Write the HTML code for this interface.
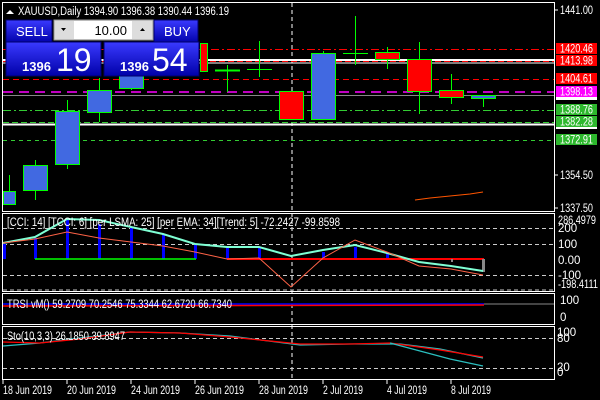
<!DOCTYPE html>
<html><head><meta charset="utf-8"><style>
html,body{margin:0;padding:0;background:#000;width:600px;height:400px;overflow:hidden}
svg{display:block}
text{font-family:"Liberation Sans",sans-serif;font-size:11.5px;fill:#fff}
</style></head><body>
<svg width="600" height="400" viewBox="0 0 600 400">
<rect width="600" height="400" fill="#000"/>
<g fill="none" stroke="#fff" stroke-width="1">
<path d="M2.5 2.5H554.5V211.5H2.5Z"/>
<path d="M2.5 213.5H554.5V291.5H2.5Z"/>
<path d="M2.5 293.5H554.5V324.5H2.5Z"/>
<path d="M2.5 326.5H554.5V379.5H2.5Z"/>
</g>
<line x1="292" y1="3" x2="292" y2="379" stroke="#fff" stroke-dasharray="4,3"/>
<g stroke-width="1">
<line x1="3" y1="49.5" x2="554" y2="49.5" stroke="#f00" stroke-dasharray="8,3,2,3"/>
<line x1="3" y1="60" x2="554" y2="60" stroke="#fff" stroke-width="2"/>
<line x1="3" y1="61.5" x2="554" y2="61.5" stroke="#f00" stroke-dasharray="6,3"/>
<line x1="3" y1="63" x2="554" y2="63" stroke="#fff"/>
<line x1="3" y1="79.5" x2="554" y2="79.5" stroke="#f00" stroke-dasharray="6,4"/>
<line x1="3" y1="92" x2="554" y2="92" stroke="#f0f" stroke-width="1.5" stroke-dasharray="10,6"/>
<line x1="3" y1="95.5" x2="554" y2="95.5" stroke="#888"/>
<line x1="3" y1="110.5" x2="554" y2="110.5" stroke="#3c3" stroke-dasharray="8,3,2,3"/>
<line x1="3" y1="122.5" x2="554" y2="122.5" stroke="#3c3" stroke-dasharray="6,3"/>
<line x1="3" y1="124.5" x2="554" y2="124.5" stroke="#fff" stroke-width="2"/>
<line x1="3" y1="140.5" x2="554" y2="140.5" stroke="#3c3" stroke-dasharray="4,4"/>
</g>
<polyline points="415,200 430,198 450,196 470,194 483,192" fill="none" stroke="#f50" stroke-width="1"/>
<g stroke="#0f0" stroke-width="1">
<line x1="9.5" y1="175" x2="9.5" y2="205"/><rect x="3.5" y="191.5" width="12" height="13" fill="#4169e1"/>
<line x1="35.5" y1="160" x2="35.5" y2="200"/><rect x="23.5" y="165.5" width="24" height="25" fill="#4169e1"/>
<line x1="67.5" y1="100" x2="67.5" y2="169"/><rect x="55.5" y="111.5" width="24" height="53" fill="#4169e1"/>
<line x1="99.5" y1="78" x2="99.5" y2="122"/><rect x="87.5" y="90.5" width="24" height="22" fill="#4169e1"/>
<line x1="131.5" y1="70" x2="131.5" y2="90"/><rect x="119.5" y="70.5" width="24" height="18" fill="#4169e1"/>
<rect x="200.5" y="43.5" width="7" height="28" fill="#f00"/>
<line x1="227.5" y1="65" x2="227.5" y2="92"/><line x1="215" y1="70.5" x2="240" y2="70.5" stroke-width="2"/>
<line x1="259.5" y1="41" x2="259.5" y2="77"/><line x1="247" y1="69.5" x2="272" y2="69.5"/>
<rect x="279.5" y="91.5" width="24" height="28" fill="#f00"/>
<line x1="323.5" y1="51" x2="323.5" y2="120"/><rect x="311.5" y="53.5" width="24" height="66" fill="#4169e1"/>
<line x1="355.5" y1="16" x2="355.5" y2="65"/><line x1="343" y1="53.5" x2="368" y2="53.5"/>
<line x1="387.5" y1="47" x2="387.5" y2="69"/><rect x="375.5" y="52.5" width="24" height="7" fill="#f00"/>
<line x1="419.5" y1="42" x2="419.5" y2="114"/><rect x="407.5" y="59.5" width="24" height="32" fill="#f00"/>
<line x1="451.5" y1="74" x2="451.5" y2="104"/><rect x="439.5" y="90.5" width="24" height="7" fill="#f00"/>
<line x1="483.5" y1="96" x2="483.5" y2="107"/><rect x="471.5" y="95.5" width="24" height="3" fill="#4169e1"/>
</g>
<path d="M6 14 L10 10 L14 14Z" fill="#fff"/>
<text x="18" y="15" textLength="211" lengthAdjust="spacingAndGlyphs">XAUUSD,Daily  1394.90 1396.38 1390.44 1396.19</text>
<g>
<line x1="555" y1="10" x2="558" y2="10" stroke="#fff"/><text x="560" y="14" textLength="33" lengthAdjust="spacingAndGlyphs">1441.00</text>
<line x1="555" y1="175" x2="558" y2="175" stroke="#fff"/><text x="560" y="179" textLength="33" lengthAdjust="spacingAndGlyphs">1354.50</text>
<line x1="555" y1="208" x2="558" y2="208" stroke="#fff"/><text x="560" y="212" textLength="33" lengthAdjust="spacingAndGlyphs">1337.50</text>
<rect x="556" y="43" width="41" height="11" fill="#f00"/><text x="560" y="52.5" textLength="33" lengthAdjust="spacingAndGlyphs">1420.46</text>
<rect x="556" y="55" width="41" height="11" fill="#f00"/><text x="560" y="64.5" textLength="33" lengthAdjust="spacingAndGlyphs">1413.98</text>
<rect x="556" y="73" width="41" height="11" fill="#f00"/><text x="560" y="82.5" textLength="33" lengthAdjust="spacingAndGlyphs">1404.61</text>
<rect x="556" y="86" width="41" height="11" fill="#f0f"/><text x="560" y="95.5" textLength="33" lengthAdjust="spacingAndGlyphs">1398.13</text>
<rect x="556" y="97" width="41" height="3" fill="#fff"/>
<rect x="556" y="104" width="41" height="11" fill="#2db82d"/><text x="560" y="113.5" textLength="33" lengthAdjust="spacingAndGlyphs">1388.76</text>
<rect x="556" y="116" width="41" height="11" fill="#2db82d"/><text x="560" y="125.5" textLength="33" lengthAdjust="spacingAndGlyphs">1382.28</text>
<rect x="556" y="127" width="41" height="2" fill="#fff"/>
<rect x="556" y="134" width="41" height="11" fill="#2db82d"/><text x="560" y="143.5" textLength="33" lengthAdjust="spacingAndGlyphs">1372.91</text>
</g>
<g stroke="#ccc" stroke-dasharray="4,3">
<line x1="3" y1="228.5" x2="554" y2="228.5"/><line x1="3" y1="244.5" x2="554" y2="244.5"/>
<line x1="3" y1="275.5" x2="554" y2="275.5"/><line x1="3" y1="290" x2="554" y2="290"/>
</g>
<g fill="#00f">
<rect x="3" y="244" width="3" height="15"/><rect x="34" y="238" width="3" height="21"/><rect x="66" y="220" width="3" height="39"/>
<rect x="98" y="224" width="3" height="35"/><rect x="130" y="228" width="3" height="31"/><rect x="162" y="234" width="3" height="25"/>
<rect x="194" y="244" width="3" height="15"/><rect x="226" y="248" width="3" height="11"/><rect x="258" y="248" width="3" height="11"/>
<rect x="322" y="252" width="3" height="7"/><rect x="354" y="247" width="3" height="12"/><rect x="386" y="252" width="3" height="7"/>
</g>
<line x1="35" y1="259" x2="196" y2="259" stroke="#0f0" stroke-width="1.5"/>
<line x1="227" y1="259" x2="484" y2="259" stroke="#f00" stroke-width="2"/>
<rect x="482" y="259" width="3" height="13" fill="#888"/>
<rect x="451" y="259" width="2" height="3" fill="#888"/>
<polyline points="3,243 35,237 67,219 99,220 131,227 163,234 195,244 227,247 259,247 291,256 323,250 355,245 387,253 419,262 451,266 483,271" fill="none" stroke="#7fffd4" stroke-width="2"/>
<polyline points="3,243 35,239 67,232 99,238 131,242 163,246 195,252 227,259 259,258 291,287 323,258 355,240 387,252 419,266 451,269 483,275" fill="none" stroke="#ff6347" stroke-width="1"/>
<text x="7" y="226" textLength="333" lengthAdjust="spacingAndGlyphs">[CCI: 14] [TCCI: 6] [per LSMA: 25] [per EMA: 34][Trend: 5]  -72.2427 -99.8598</text>
<text x="558" y="224" textLength="38" lengthAdjust="spacingAndGlyphs">286.4979</text>
<text x="558" y="232">200</text>
<text x="558" y="248">100</text>
<text x="558" y="264">0.00</text>
<text x="558" y="279">-100</text>
<text x="558" y="288" textLength="40" lengthAdjust="spacingAndGlyphs">-198.4111</text>
<line x1="3" y1="304" x2="554" y2="304" stroke="#888"/>
<line x1="3" y1="304" x2="484" y2="304" stroke="#00f" stroke-width="1.5"/>
<line x1="3" y1="306" x2="484" y2="305" stroke="#f00" stroke-width="1.5"/>
<text x="7" y="308" textLength="225" lengthAdjust="spacingAndGlyphs">TRSI vM() 59.2709 70.2546 75.3344 62.6720 66.7340</text>
<text x="560" y="304">100</text><text x="560" y="321">0</text>
<g stroke="#ccc" stroke-dasharray="4,3">
<line x1="3" y1="338.5" x2="554" y2="338.5"/><line x1="3" y1="368.5" x2="554" y2="368.5"/>
</g>
<polyline points="3,346 40,343 80,338 130,332 180,333 230,336 300,345 350,344 400,344 440,349 483,358" fill="none" stroke="#2bbfbf" stroke-width="1.2"/>
<polyline points="3,342 40,343 80,339 130,332 180,333 230,337 300,344 350,344 390,343 440,350 483,357" fill="none" stroke="#f00" stroke-width="1.2"/>
<polyline points="390,343 420,351 450,359 483,366" fill="none" stroke="#2bbfbf" stroke-width="1.2"/>
<text x="7" y="340" textLength="118" lengthAdjust="spacingAndGlyphs">Sto(10,3,3) 26.1850 39.8947</text>
<text x="557" y="336">100</text><text x="557" y="342">80</text>
<text x="557" y="371">20</text><text x="557" y="376">0</text>
<g stroke="#fff"><line x1="3" y1="380" x2="3" y2="384"/><line x1="67" y1="380" x2="67" y2="384"/><line x1="131" y1="380" x2="131" y2="384"/><line x1="195" y1="380" x2="195" y2="384"/><line x1="259" y1="380" x2="259" y2="384"/><line x1="323" y1="380" x2="323" y2="384"/><line x1="387" y1="380" x2="387" y2="384"/><line x1="451" y1="380" x2="451" y2="384"/></g>
<g>
<text x="3" y="394" textLength="49" lengthAdjust="spacingAndGlyphs">18 Jun 2019</text><text x="67" y="394" textLength="49" lengthAdjust="spacingAndGlyphs">20 Jun 2019</text><text x="131" y="394" textLength="49" lengthAdjust="spacingAndGlyphs">24 Jun 2019</text>
<text x="195" y="394" textLength="49" lengthAdjust="spacingAndGlyphs">26 Jun 2019</text><text x="259" y="394" textLength="49" lengthAdjust="spacingAndGlyphs">28 Jun 2019</text><text x="323" y="394" textLength="40" lengthAdjust="spacingAndGlyphs">2 Jul 2019</text>
<text x="387" y="394" textLength="40" lengthAdjust="spacingAndGlyphs">4 Jul 2019</text><text x="451" y="394" textLength="40" lengthAdjust="spacingAndGlyphs">8 Jul 2019</text>
</g>
<defs><linearGradient id="bg" x1="0" y1="0" x2="0" y2="1"><stop offset="0" stop-color="#3a3aff"/><stop offset="1" stop-color="#0000a8"/></linearGradient></defs>
<rect x="6" y="20" width="46" height="23" fill="url(#bg)" stroke="#00006a"/>
<line x1="10" y1="42" x2="48" y2="42" stroke="#aab"/>
<text x="16" y="36" style="font-size:13px">SELL</text>
<rect x="54" y="20" width="99" height="20" fill="#ddd" stroke="#999"/>
<rect x="74" y="21" width="58" height="18" fill="#fff"/>
<path d="M61 28h5l-2.5 3z M140 31h5l-2.5-3z" fill="#000"/>
<text x="127" y="35" text-anchor="end" style="fill:#000;font-size:13px">10.00</text>
<rect x="154" y="20" width="44" height="23" fill="url(#bg)" stroke="#00006a"/>
<line x1="157" y1="42" x2="195" y2="42" stroke="#aab"/>
<text x="164" y="36" style="font-size:13px">BUY</text>
<rect x="6" y="42" width="95" height="34" fill="url(#bg)" stroke="#00006a"/>
<rect x="104" y="42" width="95" height="34" fill="url(#bg)" stroke="#00006a"/>
<text x="22" y="71" style="font-size:13px;font-weight:bold">1396</text>
<text x="56" y="71" style="font-size:32px">19</text>
<text x="120" y="71" style="font-size:13px;font-weight:bold">1396</text>
<text x="152" y="71" style="font-size:32px">54</text>
</svg>
</body></html>
